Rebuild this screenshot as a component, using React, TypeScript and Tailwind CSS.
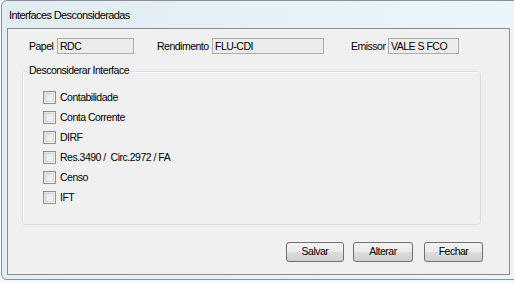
import React from "react";

const font = { fontFamily: '"Liberation Sans", Arial, sans-serif' };

function Field({ label, value, labelW, inputW, ml }: { label: string; value: string; labelW: string; inputW: string; ml: string }) {
  return (
    <div className={`flex items-center ${ml}`}>
      <span className={`${labelW} text-[10.5px] leading-none tracking-[-0.5px] text-black`}>{label}</span>
      <div className={`${inputW} h-[16px] border border-[#adadad] bg-[#ececec] pl-[2px] text-[10.5px] leading-[14px] tracking-[-0.5px] text-black`}>
        {value}
      </div>
    </div>
  );
}

function Check({ label }: { label: string }) {
  return (
    <div className="flex h-[20px] items-center">
      <div className="ml-[20px] h-[13px] w-[13px] border border-[#8e8f8f] bg-gradient-to-br from-[#dcdcdc] to-[#fbfbfb] p-[1px]">
        <div className="h-full w-full border border-[#d8d8d8] bg-gradient-to-br from-[#e2e2e2] to-[#f9f9f9]" />
      </div>
      <span className="ml-[4px] whitespace-pre text-[10.5px] leading-none tracking-[-0.5px] text-black">{label}</span>
    </div>
  );
}

function Btn({ label, w, ml }: { label: string; w: string; ml: string }) {
  return (
    <div
      className={`${w} ${ml} flex h-[20px] items-center justify-center rounded-[3px] border border-[#707070] text-[10.5px] tracking-[-0.5px] text-black`}
      style={{ background: "linear-gradient(to bottom, #f2f2f2 0%, #ebebeb 50%, #dddddd 51%, #cfcfcf 100%)" }}
    >
      {label}
    </div>
  );
}

export default function App() {
  return (
    <div className="h-[283px] w-[514px] overflow-hidden bg-[#f4f8fa]" style={font}>
      <div className="ml-[1px] h-[280px] w-[530px] rounded-tl-[6px] rounded-bl-[6px] border border-[#8b9097] bg-gradient-to-r from-[#e2ecf3] to-[#eaf6f9]">
        <div className="flex h-[27px] items-center pl-[7px] pt-[2px] text-[11px] tracking-[-0.6px] text-black">Interfaces Desconsideradas</div>
        <div className="ml-[5px] h-[247px] w-[503px] border border-[#8c8c8c] bg-[#f0f0f0]">
          <div className="mt-[9px] flex">
            <Field label="Papel" value="RDC" labelW="w-[28px]" inputW="w-[77px]" ml="ml-[21px]" />
            <Field label="Rendimento" value="FLU-CDI" labelW="w-[55px]" inputW="w-[112px]" ml="ml-[23px]" />
            <Field label="Emissor" value="VALE S FCO" labelW="w-[37px]" inputW="w-[71px]" ml="ml-[27px]" />
          </div>
          <div className="relative ml-[14px] mt-[17px] w-[459px] rounded-[3px] border border-[#d5dfe5] pb-[17px] pt-[15px] shadow-[inset_1px_1px_0_#ffffff]">
            <span className="absolute left-[5px] top-[-7px] bg-[#f0f0f0] px-[1px] text-[10.5px] leading-none tracking-[-0.5px] text-black">
              Desconsiderar Interface
            </span>
            <Check label="Contabilidade" />
            <Check label="Conta Corrente" />
            <Check label="DIRF" />
            <Check label="Res.3490 /  Circ.2972 / FA" />
            <Check label="Censo" />
            <Check label="IFT" />
          </div>
          <div className="mt-[17px] flex">
            <Btn label="Salvar" w="w-[58px]" ml="ml-[278px]" />
            <Btn label="Alterar" w="w-[60px]" ml="ml-[9px]" />
            <Btn label="Fechar" w="w-[59px]" ml="ml-[11px]" />
          </div>
        </div>
      </div>
    </div>
  );
}
